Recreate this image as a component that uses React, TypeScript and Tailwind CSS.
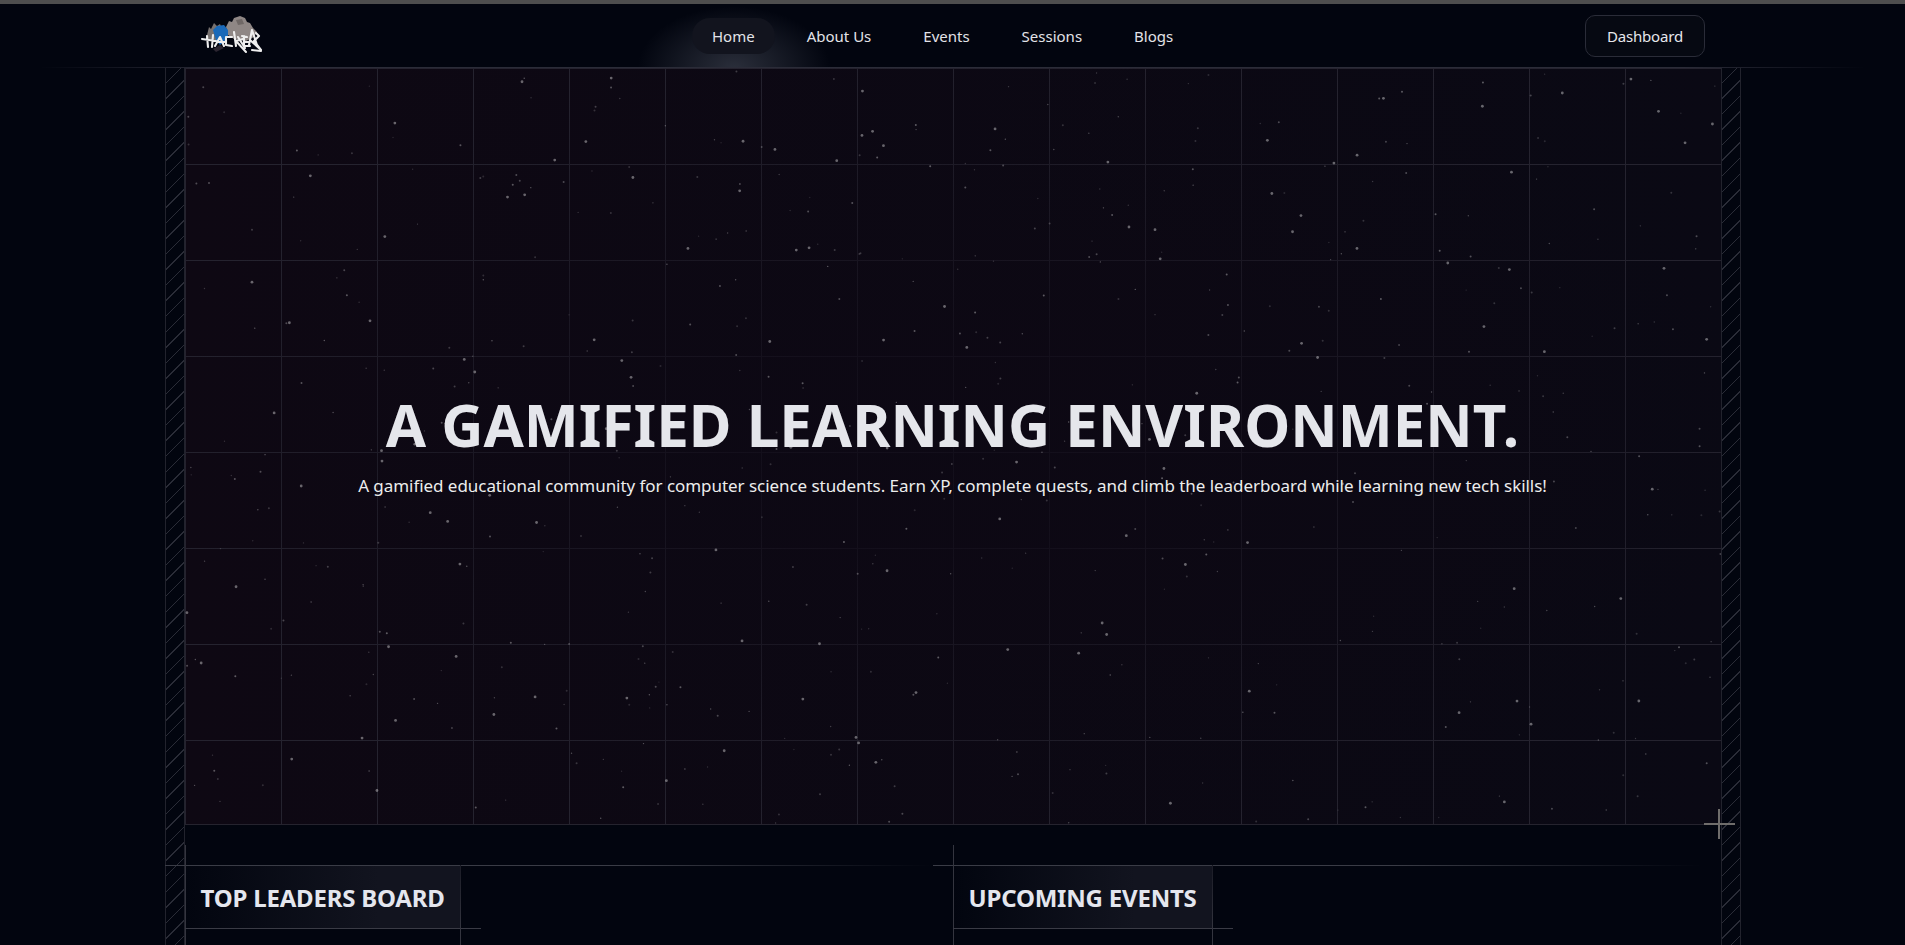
import React from 'react';

const FONT = '"Noto Sans", "Open Sans", sans-serif';

// seeded so the starfield stays the same between runs
function makeStars(count: number) {
  let seed = 20240611;
  const rand = () => {
    seed = (seed * 1664525 + 1013904223) % 4294967296;
    return seed / 4294967296;
  };
  const stars = [];
  for (let i = 0; i < count; i++) {
    const big = rand();
    stars.push({
      x: rand() * 1536,
      y: rand() * 756,
      r: big > 0.8 ? 1.4 : big > 0.45 ? 1 : 0.7,
      o: big > 0.8 ? 0.38 : 0.12 + rand() * 0.22,
    });
  }
  return stars;
}

const STARS = makeStars(640);

const HackersLogo = () => (
  <svg width="64" height="42" viewBox="0 0 64 42" className="shrink-0">
    <path d="M26 12 L29 6 L32 7 L34 3 L40 1 L45 3 L47 7 L50 8 L53 13 L57 17 L54 22 L46 26 L34 24 L28 20 Z" fill="#8f8785" />
    <path d="M36 5 L42 4 L44 9 L38 10 Z" fill="#6f6866" />
    <path d="M6 24 L9 12 L11 14 L14 8 L17 11 L20 9 L22 14 L22 26 Z" fill="#77716f" />
    <path d="M13 15 L17 11 L24 10 L28 15 L28 22 L24 27 L20 30 L16 25 Z" fill="#1a69b8" />
    <path d="M13 34 L20 30 L24 33 L16 37 Z" fill="#2b2530" />
    <g stroke="#eeeeee" strokeWidth="2.1" strokeLinecap="round" strokeLinejoin="round" fill="none">
      <path d="M2 24 L16 26 M7 21 L8 32 M13 20 L12 32" />
      <path d="M15 31 L20 22 L24 31 M17 27 L26 27" />
      <path d="M32 22 L26 22 L26 30 L32 31" />
      <path d="M34 17 L36 31 M43 24 L36 26 L46 37 M38 22 L45 33" />
      <path d="M42 21 L47 22 M44 27 L49 27 M44 21 L44 31 L50 31" />
      <path d="M49 30 L52 15 L57 30 M50 25 L61 35 L54 26 L59 21 L56 18" />
      <path d="M52 35 L61 36" />
    </g>
  </svg>
);

const SectionTitle = ({ title }: { title: string }) => (
  <div className="relative w-max h-[64px] mt-[40px] flex items-center pl-4 pr-4 pt-[2px] bg-[linear-gradient(to_right,transparent,#12141f_70%)]">
    <h2 className="text-[24px] font-bold text-[#e4e6ee] whitespace-nowrap tracking-[-0.2px]">{title}</h2>
    <span className="absolute left-[-20px] top-0 w-[768px] h-px bg-[linear-gradient(to_right,#3a3c46_60%,transparent)]" />
    <span className="absolute left-0 top-[-20px] w-px h-[140px] bg-[#34353f]" />
    <span className="absolute left-0 bottom-0 w-[calc(100%+20px)] h-px bg-[#3a3b45]" />
    <span className="absolute right-0 top-0 w-px h-[100px] bg-[linear-gradient(to_bottom,#1b1c26,#34353f_64%)]" />
  </div>
);

const Hatch = () => (
  <div className="w-5 shrink-0 border-x border-[#22232d] bg-[repeating-linear-gradient(135deg,transparent_0,transparent_10px,#2a2c37_10px,#2a2c37_11px)]" />
);

export default function App() {
  const links = ['Home', 'About Us', 'Events', 'Sessions', 'Blogs'];

  return (
    <div className="h-[945px] overflow-hidden flex flex-col bg-[#02050f]" style={{ fontFamily: FONT }}>
      <div className="h-1 shrink-0 bg-[#4e4e4e]" />

      <header className="relative h-[64px] shrink-0 flex items-center pl-[200px] pr-[200px]">
        {/* spotlight under the active link */}
        <span className="absolute left-[634px] bottom-0 w-[200px] h-[64px] bg-[radial-gradient(ellipse_at_bottom,#2a2e3a_0%,transparent_68%)] pointer-events-none" />
        <span className="absolute left-[40px] right-[40px] bottom-0 h-px bg-[linear-gradient(to_right,transparent,#2b2c38_10%,#2b2c38_90%,transparent)]" />
        <HackersLogo />
        <nav className="relative ml-[428px] flex items-center gap-3 text-[15px] text-[#e2e3e8]">
          <a className="px-5 h-9 flex items-center rounded-full bg-[#12141e]">{links[0]}</a>
          {links.slice(1).map((link) => (
            <a key={link} className="px-5 h-9 flex items-center">{link}</a>
          ))}
        </nav>
        <button className="relative ml-auto w-[120px] h-[42px] rounded-[10px] border border-[#2a2c38] bg-[#060912] text-[15px] tracking-[-0.2px] text-[#e6e7ec]">
          Dashboard
        </button>
      </header>

      <main className="flex-1 w-[1576px] mx-auto flex min-h-0">
        <Hatch />
        <div className="flex-1 min-w-0 flex flex-col">
          <section className="relative h-[757px] shrink-0 flex flex-col items-center pt-[319px] bg-[linear-gradient(to_right,#0e0813,#0a0914)] border-b border-[#25232e]">
            <div className="absolute inset-0 bg-[linear-gradient(to_right,#25232f_1px,transparent_1px),linear-gradient(to_bottom,#25232f_1px,transparent_1px)] bg-size-[96px_96px]" />
            <div className="absolute inset-0 bg-[radial-gradient(ellipse_at_center,#0d0814bb_20%,transparent_75%)]" />
            <svg className="absolute inset-0" width="1536" height="756">
              {STARS.map((s, i) => (
                <circle key={i} cx={s.x} cy={s.y} r={s.r} fill="#ffffff" opacity={s.o} />
              ))}
            </svg>
            <h1 className="relative text-[58.3px] leading-[75px] font-bold text-[#e5e6eb] whitespace-nowrap">
              A GAMIFIED LEARNING ENVIRONMENT.
            </h1>
            <p className="relative mt-[10px] text-[17px] leading-[28px] tracking-[-0.05px] text-[#eceded] whitespace-nowrap">
              A gamified educational community for computer science students. Earn XP, complete quests, and climb the leaderboard while learning new tech skills!
            </p>
            {/* crosshair on the corner */}
            <span className="absolute right-[-14px] bottom-[-1px] w-[31px] h-[2px] bg-[#6f6d6b]" />
            <span className="absolute right-px bottom-[-15px] w-[2px] h-[30px] bg-[#6f6d6b]" />
          </section>

          <div className="grid grid-cols-2 flex-1">
            <div>
              <SectionTitle title="TOP LEADERS BOARD" />
            </div>
            <div>
              <SectionTitle title="UPCOMING EVENTS" />
            </div>
          </div>
        </div>
        <Hatch />
      </main>
    </div>
  );
}
